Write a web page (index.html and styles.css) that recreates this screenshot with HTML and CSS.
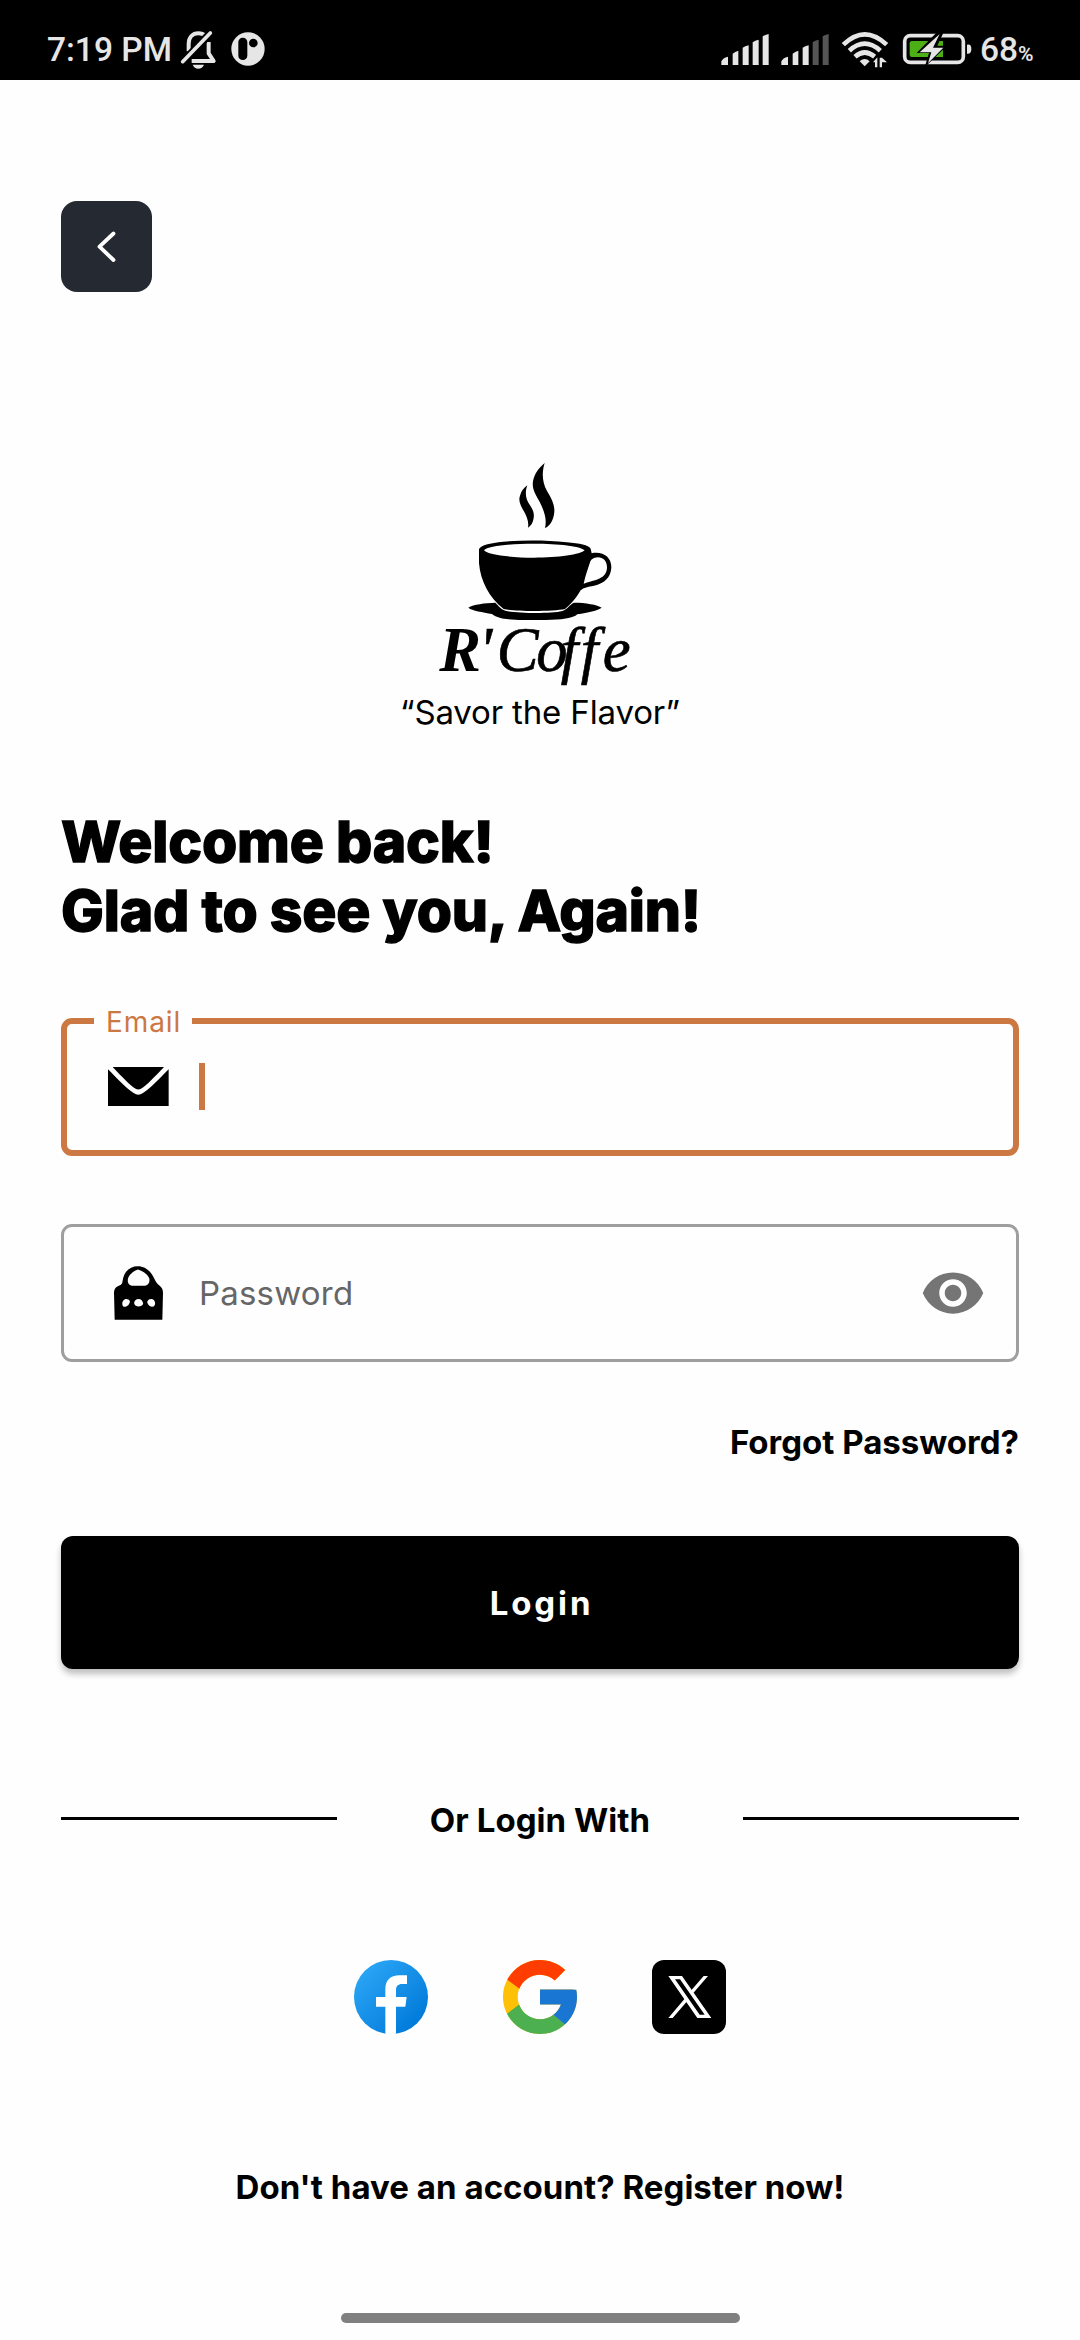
FILE: index.html
```html
<!DOCTYPE html>
<html lang="en">
<head>
<meta charset="utf-8">
<title>R'Coffe Login</title>
<link rel="stylesheet" href="styles.css">
</head>
<body>
<header class="status">
  <div class="status-left">
    <span class="time">7:19 PM</span>
    <svg class="left-icons" viewBox="540 90 260 120" fill="#e6e6e6">
      <path d="M566 154V132C566 112 578 100 595 100C604 100 611 103 616 108M626 126V160L641 183H575" fill="none" stroke="#e6e6e6" stroke-width="12" stroke-linejoin="round"/>
      <path d="M549 186L631 100" stroke="#000" stroke-width="24"/>
      <path d="M548 185L631 99" stroke="#e6e6e6" stroke-width="11" stroke-linecap="round"/>
      <path d="M578 194H612Q607 206 595 206T578 194Z"/>
      <circle cx="744" cy="147" r="50"/>
      <rect x="715" y="113" width="27" height="67" rx="13" fill="#000"/>
      <circle cx="760" cy="129" r="13" fill="#000"/>
    </svg>
  </div>
  <div class="status-right">
    <svg class="right-icons" viewBox="60 90 756 120" fill="#e6e6e6">
      <path d="M64 184Q68 174 84 170V195H64ZM98 161Q105 155 115 152V195H98ZM128 143Q135 138 146 136V195H128ZM158 127Q165 121 176 119V195H158ZM188 109Q195 104 206 102V195H188Z"/>
      <path d="M244 184Q248 174 264 170V195H244ZM278 161Q285 155 295 152V195H278ZM308 143Q315 138 326 136V195H308Z"/>
      <path d="M338 127Q345 121 356 119V195H338ZM368 109Q375 104 386 102V195H368Z" fill="#555"/>
      <g fill="none" stroke="#e6e6e6" stroke-width="14">
        <path d="M430 134Q494 72 560 134M448 152Q494 110 541 152M465 170Q494 145 524 170"/>
      </g>
      <path d="M479 184Q494 170 509 184L494 199Z"/>
      <path d="M519 187L532 172V202H525V187ZM539 173H546L561 187H552H546V202H539Z"/>
      <rect x="614" y="107" width="176" height="80" rx="17" fill="none" stroke="#e6e6e6" stroke-width="11"/>
      <path d="M801 134Q814 131 814 147T801 161Z"/>
      <path d="M636 123H729V171H636Q629 171 629 164V130Q629 123 636 123Z" fill="#4caf16"/>
      <path d="M715 92L650 159H687L674 202L741 137H712L733 92Z" fill="#000"/>
      <path d="M719 102L659 157H694L684 190L730 143H699Z"/>
    </svg>
    <span class="level">68<small>%</small></span>
  </div>
</header>
<main class="page">
  <button class="back" aria-label="Back">
    <svg viewBox="0 0 91 91"><path d="M52.5 32.5L38.5 45.7L52.5 59" fill="none" stroke="#fff" stroke-width="3.8" stroke-linecap="round" stroke-linejoin="round"/></svg>
  </button>
  <svg class="logo" viewBox="0 0 960 740">
    <path d="M494 69C486 94 485 124 501 153C516 178 524 195 523 215C521 240 510 258 495 264C501 238 494 215 478 184C462 157 456 143 459 124C463 101 476 84 494 69Z"/>
    <path d="M442 136C434 158 437 177 449 194C460 211 463 220 461 234C459 248 453 258 444 263C447 246 441 230 430 211C420 193 415 181 420 167C424 153 432 143 442 136Z"/>
    <path fill-rule="evenodd" d="M297 328C300 316 330 309 370 305C430 300 500 300 560 307C600 311 625 315 632 326L635 340C668 333 695 351 694 383C692 413 673 430 642 437C624 441 611 442 602 451C588 476 568 497 555 507C520 515 405 515 371 507C327 473 302 424 297 370ZM312 331C322 344 390 353 462 353C535 353 602 344 614 331C603 318 535 311 462 311C390 311 323 318 312 331ZM631 364C624 387 616 406 611 431C645 419 681 418 681 381C681 357 661 346 642 354Q633 358 631 364Z"/>
    <path d="M265 503C281 493 314 489 346 488C356 497 361 507 376 512C413 520 508 522 547 513C563 508 568 494 582 488C616 488 653 494 665 503C653 512 624 517 592 523C580 535 543 540 497 540H430C384 540 350 535 336 522C308 516 277 513 265 503Z"/>
    <text class="brand" x="178 296 350 469 542 602 668" y="692"><tspan class="initial">R</tspan>'Coffe</text>
  </svg>
  <p class="tagline">“Savor the Flavor”</p>
  <h1>Welcome back!<br>Glad to see you, Again!</h1>
  <div class="field email">
    <span class="label">Email</span>
    <svg class="mail" viewBox="203 202 182 117"><path d="M217 202H371C342 232 320 257 302 267Q294 272 286 267C268 257 246 232 217 202Z"/><path d="M203 209C232 238 254 263 280 280Q294 290 308 280C334 263 356 238 385 209V319H203Z"/></svg>
    <i class="caret"></i>
  </div>
  <div class="field password">
    <svg class="lock" viewBox="220 796 148 162"><path fill-rule="evenodd" d="M222 958L220 876Q220 862 230 857L241 852Q246 848 246 840C250 811 269 796 292 796C315 796 329 810 340 830C346 842 350 849 358 855Q368 863 368 876L366 958ZM292 806C279 811 265 821 262 835C260 848 267 855 278 855H311C322 855 328 847 327 835C324 821 307 811 292 806ZM257 895C247 895 242 909 247 917C255 922 268 914 268 901Q265 895 257 895ZM294 895C286 895 280 902 281 909C283 916 288 918 294 918S307 916 308 909C307 901 302 895 294 895ZM332 895C324 895 319 902 321 907C324 916 334 921 341 917C348 909 343 895 332 895Z"/></svg>
    <span class="placeholder">Password</span>
    <svg class="eye" viewBox="0 0 24 24" fill="#757575"><path d="M12 4.5C7 4.5 2.73 7.61 1 12c1.73 4.39 6 7.5 11 7.5s9.27-3.11 11-7.5c-1.73-4.39-6-7.5-11-7.5zM12 17c-2.76 0-5-2.24-5-5s2.24-5 5-5 5 2.24 5 5-2.24 5-5 5zm0-8c-1.66 0-3 1.34-3 3s1.34 3 3 3 3-1.34 3-3-1.34-3-3-3z"/></svg>
  </div>
  <a class="forgot">Forgot Password?</a>
  <button class="login">Login</button>
  <div class="divider"><i></i><span>Or Login With</span><i></i></div>
  <div class="social">
    <svg viewBox="0 0 222 222">
      <defs><linearGradient id="fb" x1="0.13" y1="0.13" x2="0.87" y2="0.87"><stop offset="0" stop-color="#2aa4f4"/><stop offset="1" stop-color="#007ad9"/></linearGradient></defs>
      <circle cx="111" cy="111" r="111" fill="url(#fb)"/>
      <path d="M94 221V140H66V111H94V88C94 61 109 46 136 46H159V72H145C131 72 126 79 126 91V111H158L154 140H126V221Q110 223 94 221Z" fill="#fff"/>
    </svg>
    <svg viewBox="4 4 40 40">
      <path fill="#FFC107" d="M43.611,20.083H42V20H24v8h11.303c-1.649,4.657-6.08,8-11.303,8c-6.627,0-12-5.373-12-12c0-6.627,5.373-12,12-12c3.059,0,5.842,1.154,7.961,3.039l5.657-5.657C34.046,6.053,29.268,4,24,4C12.955,4,4,12.955,4,24c0,11.045,8.955,20,20,20c11.045,0,20-8.955,20-20C44,22.659,43.862,21.35,43.611,20.083z"/>
      <path fill="#FF3D00" d="M6.306,14.691l6.571,4.819C14.655,15.108,18.961,12,24,12c3.059,0,5.842,1.154,7.961,3.039l5.657-5.657C34.046,6.053,29.268,4,24,4C16.318,4,9.656,8.337,6.306,14.691z"/>
      <path fill="#4CAF50" d="M24,44c5.166,0,9.86-1.977,13.409-5.192l-6.19-5.238C29.211,35.091,26.715,36,24,36c-5.202,0-9.619-3.317-11.283-7.946l-6.522,5.025C9.505,39.556,16.227,44,24,44z"/>
      <path fill="#1976D2" d="M43.611,20.083H42V20H24v8h11.303c-0.792,2.237-2.231,4.166-4.087,5.571l6.193,5.236C36.971,39.205,44,34,44,24C44,22.659,43.862,21.35,43.611,20.083z"/>
    </svg>
    <svg viewBox="0 0 222 222">
      <rect width="222" height="222" rx="36"/>
      <path fill="#fff" fill-rule="evenodd" d="M49 48H90L178 174H136ZM69 58L143 164H158L84 58Z"/>
      <path fill="#fff" d="M155 48H168L124 99L118 91ZM98 116L104 125L62 174H49Z"/>
    </svg>
  </div>
  <p class="register">Don't have an account? Register now!</p>
  <div class="home-bar"></div>
</main>
</body>
</html>
```

FILE: styles.css
```css
* { box-sizing: border-box; margin: 0; padding: 0; }
body { width: 1080px; height: 2340px; overflow: hidden; background: #fefefe; color: #000; font-family: Inter, sans-serif; font-size: 33px; line-height: 40px; }
svg { display: block; flex: none; }
button { border: 0; font: inherit; }
.status { height: 80px; background: #000; color: #e6e6e6; display: flex; justify-content: space-between; padding: 30px 45px 0 47px; font-family: Roboto, sans-serif; font-weight: 500; font-size: 33.5px; }
.status-left, .status-right { display: flex; }
.time { width: 133px; white-space: nowrap; }
.left-icons { width: 86.67px; height: 40px; }
.right-icons { width: 252px; height: 40px; }
.level { width: 55px; margin-left: 8px; white-space: nowrap; }
.level small { font-size: 21px; font-weight: 600; }
.page { display: flex; flex-direction: column; padding: 121px 61px 0; height: 2260px; }
.back { width: 91px; height: 91px; border-radius: 16px; background: #252932; }
.logo { width: 320px; height: 246.67px; margin: 148px 0 0 319px; }
.brand { font-family: "Liberation Serif", serif; font-style: italic; font-size: 188px; stroke: #000; stroke-width: 2px; }
.initial { font-weight: 700; stroke: none; }
.tagline { text-align: center; margin-top: 5.33px; letter-spacing: -0.15px; }
h1 { font-size: 57px; line-height: 69px; font-weight: 800; letter-spacing: -0.2px; -webkit-text-stroke: 1.3px #000; margin-top: 75px; }
.field { position: relative; display: flex; align-items: center; height: 138px; border-radius: 11px; }
.email { border: 6px solid #cc7843; margin-top: 73px; padding-left: 41px; }
.label { position: absolute; left: 27px; top: -19px; width: 98px; padding-left: 12px; background: #fefefe; color: #cc7843; font-size: 28px; line-height: 34px; letter-spacing: 0.9px; }
.mail { width: 60.67px; height: 39px; }
.caret { width: 6px; height: 47px; margin-left: 30px; background: #cc7843; }
.password { border: 3px solid #9e9e9e; margin-top: 68px; padding: 0 30px 0 49.5px; }
.lock { width: 49px; height: 54px; }
.placeholder { flex: 1; margin-left: 36.5px; color: #666; letter-spacing: 0.2px; }
.forgot { align-self: flex-end; margin-top: 60px; font-weight: 700; }
.eye { width: 66px; height: 66px; }
.login { height: 133px; margin-top: 74px; border-radius: 12px; background: #000; color: #fff; font-weight: 700; letter-spacing: 2.9px; padding: 1px 0 0 3px; box-shadow: 0 5px 6px rgba(0,0,0,.25); }
.divider { display: flex; justify-content: space-between; align-items: center; height: 40px; margin-top: 131px; font-weight: 700; letter-spacing: 0.05px; }
.divider i { width: 276px; height: 3px; background: #000; margin-bottom: 3px; }
.social { display: flex; justify-content: center; gap: 75px; margin-top: 120px; }
.social svg { width: 74px; height: 74px; }
.register { margin-top: 133px; text-align: center; font-weight: 700; white-space: nowrap; letter-spacing: 0.04px; }
.home-bar { width: 399px; height: 10px; margin: 106px auto 0; border-radius: 5px; background: #808080; }
```
